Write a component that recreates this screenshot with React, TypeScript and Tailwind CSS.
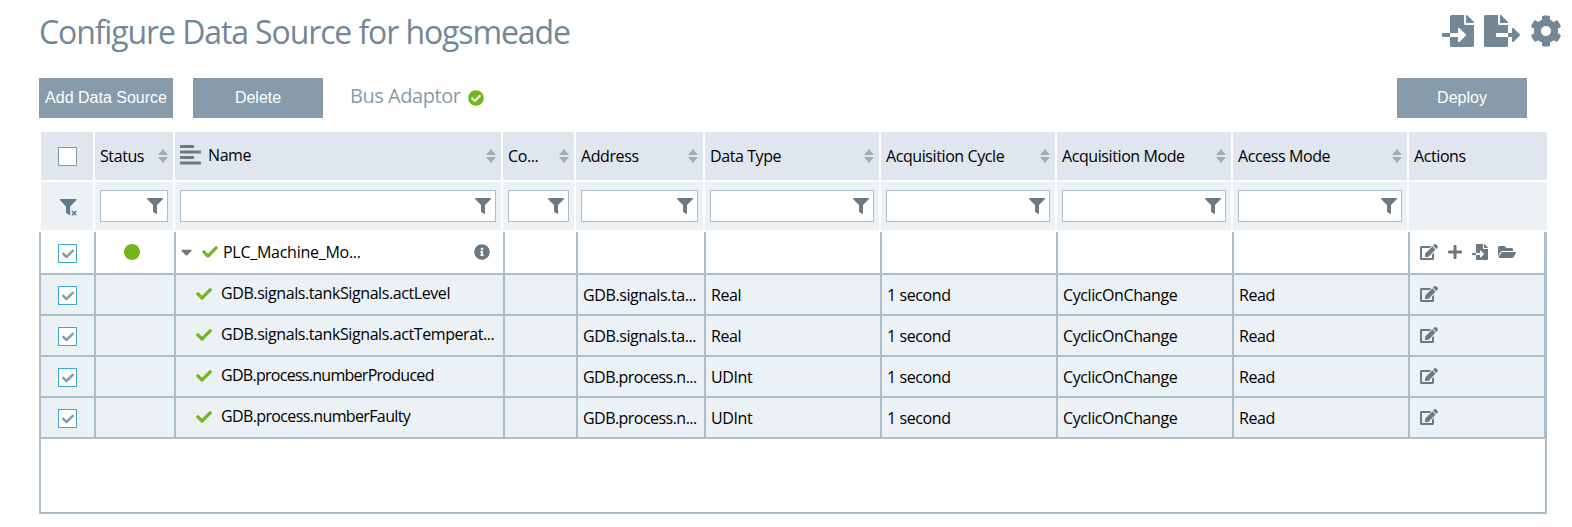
import React from "react";
import {
  FaCaretDown,
  FaCheck,
  FaCheckCircle,
  FaCog,
  FaEdit,
  FaFileExport,
  FaFileImport,
  FaFilter,
  FaFolderOpen,
  FaInfoCircle,
  FaPlus,
} from "react-icons/fa";

const HEAD_GRID =
  "grid grid-cols-[52px_78px_326px_71px_127px_174px_174px_174px_174px_138px] gap-x-0.5 pl-0.5";
const BODY_GRID =
  "grid grid-cols-[55px_80px_329px_73px_128px_176px_176px_176px_176px_136px]";

const columns = [
  "Status",
  "Name",
  "Co...",
  "Address",
  "Data Type",
  "Acquisition Cycle",
  "Acquisition Mode",
  "Access Mode",
];

const signals = [
  {
    name: "GDB.signals.tankSignals.actLevel",
    address: "GDB.signals.ta...",
    type: "Real",
    nameTracking: "tracking-[-0.41px]",
    addressTracking: "tracking-[-0.4px]",
  },
  {
    name: "GDB.signals.tankSignals.actTemperat...",
    address: "GDB.signals.ta...",
    type: "Real",
    nameTracking: "tracking-[-0.41px]",
    addressTracking: "tracking-[-0.4px]",
  },
  {
    name: "GDB.process.numberProduced",
    address: "GDB.process.n...",
    type: "UDInt",
    nameTracking: "tracking-[-0.72px]",
    addressTracking: "tracking-[-0.54px]",
  },
  {
    name: "GDB.process.numberFaulty",
    address: "GDB.process.n...",
    type: "UDInt",
    nameTracking: "tracking-[-0.63px]",
    addressTracking: "tracking-[-0.54px]",
  },
];

function SortIcon() {
  return (
    <svg width="10" height="14" viewBox="0 0 10 14" className="shrink-0 fill-[#a3adb4]">
      <path d="M5 0 10 6H0zM0 8h10l-5 6z" />
    </svg>
  );
}

function AlignIcon() {
  return (
    <svg width="21" height="20" viewBox="0 0 21 20" className="shrink-0 fill-[#6b7984]">
      <rect y="0" width="14" height="3" rx="0.6" />
      <rect y="5.5" width="21" height="3" rx="0.6" />
      <rect y="11" width="14" height="3" rx="0.6" />
      <rect y="16.5" width="21" height="3" rx="0.6" />
    </svg>
  );
}

function ClearFilterIcon() {
  return (
    <svg width="17" height="17" viewBox="0 0 17 17" className="fill-[#5f7a8a]">
      <path d="M0 0h16.4v1L10.2 7.4V16.6L6 13.8V7.4L0 1z" />
      <path
        d="M12 12l4.2 4.2M16.2 12l-4.2 4.2"
        className="stroke-[#5f7a8a]"
        strokeWidth="1.6"
      />
    </svg>
  );
}

function Checkbox({ checked }: { checked?: boolean }) {
  return (
    <span
      className={`flex size-[19px] items-center justify-center border bg-white ${
        checked ? "border-[#3fa9c9]" : "border-[#8099ab]"
      }`}
    >
      {checked && <FaCheck className="size-3 text-[#8799a9]" />}
    </span>
  );
}

function Cell({ children, className = "" }: { children?: React.ReactNode; className?: string }) {
  return (
    <div
      className={`flex items-center overflow-hidden border-r-2 border-b-2 border-[#aabecb] whitespace-nowrap ${className}`}
    >
      {children}
    </div>
  );
}

function Button({ children, className }: { children: React.ReactNode; className: string }) {
  return (
    <button
      className={`h-10 shrink-0 bg-[#879baa] pb-px font-['Liberation_Sans',sans-serif] text-base tracking-normal whitespace-nowrap text-white ${className}`}
    >
      {children}
    </button>
  );
}

export default function App() {
  return (
    <div className="h-[527px] w-[1572px] overflow-hidden bg-white font-['Open_Sans',sans-serif] text-base tracking-[-0.41px] text-black">
      <header className="flex h-[78px] justify-between pr-[10px] pl-[39px]">
        <h1 className="pt-[8px] text-[32px] leading-[48px] tracking-[-1.11px] whitespace-nowrap text-[#738797]">
          Configure Data Source for hogsmeade
        </h1>
        <div className="flex gap-[10px] pt-[15px] text-[#738797]">
          <FaFileImport className="h-8 w-8" />
          <FaFileExport className="h-8 w-9" />
          <FaCog className="h-8 w-8" />
        </div>
      </header>

      <div className="flex h-[54px] pr-[45px] pl-[39px]">
        <Button className="w-[134px]">Add Data Source</Button>
        <Button className="ml-5 w-[130px]">Delete</Button>
        <div className="ml-[27px] flex h-10 items-center gap-[7px] pb-[4px] text-xl tracking-[-0.45px] text-[#879baa]">
          Bus Adaptor
          <FaCheckCircle className="mt-[4px] size-4 text-[#74b61b]" />
        </div>
        <Button className="ml-auto w-[130px]">Deploy</Button>
      </div>

      <main className="ml-[39px] w-[1508px]">
        <div className={`${HEAD_GRID} h-12`}>
          <div className="flex items-center justify-center bg-[#dfe6ed] pt-px">
            <Checkbox />
          </div>
          {columns.map((c) => (
            <div
              key={c}
              className="flex items-center justify-between bg-[#dfe6ed] pr-[5px] pl-[5px] whitespace-nowrap"
            >
              {c === "Name" ? (
                <span className="flex items-center gap-[7px] pb-0.5">
                  <AlignIcon />
                  {c}
                </span>
              ) : (
                <span>{c}</span>
              )}
              <SortIcon />
            </div>
          ))}
          <div className="flex items-center bg-[#dfe6ed] pl-[5px]">Actions</div>
        </div>

        <div className={`${HEAD_GRID} mt-0.5 h-12`}>
          <div className="flex items-center justify-center bg-[#ebf1f5] pt-[3px] pl-0.5">
            <ClearFilterIcon />
          </div>
          {columns.map((c) => (
            <div key={c} className="bg-[#ebf1f5] px-[5px] py-2">
              <div className="flex h-8 items-center justify-end border border-[#aabecb] bg-white pr-1">
                <FaFilter className="size-4 text-[#6b7984]" />
              </div>
            </div>
          ))}
          <div className="bg-[#ebf1f5]" />
        </div>

        <div className="mt-0.5 h-[282px] border-2 border-t-0 border-[#aabecb]">
          <div className={`${BODY_GRID} h-[43px]`}>
            <Cell className="justify-center pt-0.5">
              <Checkbox checked />
            </Cell>
            <Cell className="justify-center pr-[6px] pb-px">
              <span className="size-4 rounded-full bg-[#74b61b]" />
            </Cell>
            <Cell className="pr-[13px] pb-px pl-[5px]">
              <FaCaretDown className="h-[18px] w-[11px] text-[#6b7984]" />
              <FaCheck className="ml-[10px] size-4 text-[#74b61b]" />
              <span className="ml-[5px] pb-px tracking-[-0.27px]">PLC_Machine_Mo...</span>
              <FaInfoCircle className="ml-auto size-4 text-[#6b7984]" />
            </Cell>
            <Cell />
            <Cell />
            <Cell />
            <Cell />
            <Cell />
            <Cell />
            <Cell className="pb-px pl-[10px] text-[#6b7984]">
              <FaEdit className="h-4 w-[18px]" />
              <FaPlus className="ml-[10px] h-4 w-[14px]" />
              <FaFileImport className="ml-[10px] size-4" />
              <FaFolderOpen className="ml-[10px] h-4 w-[18px]" />
            </Cell>
          </div>
          {signals.map((s) => (
            <div key={s.name} className={`${BODY_GRID} h-[41px] bg-[#ebf1f5]`}>
              <Cell className="justify-center pt-0.5">
                <Checkbox checked />
              </Cell>
              <Cell />
              <Cell className="pb-px pl-5">
                <FaCheck className="size-4 shrink-0 text-[#74b61b]" />
                <span className={`ml-[9px] pb-0.5 ${s.nameTracking}`}>{s.name}</span>
              </Cell>
              <Cell />
              <Cell className={`pl-[5px] ${s.addressTracking}`}>{s.address}</Cell>
              <Cell className="pl-[5px]">{s.type}</Cell>
              <Cell className="pl-[5px]">1 second</Cell>
              <Cell className="pl-[5px]">CyclicOnChange</Cell>
              <Cell className="pl-[5px]">Read</Cell>
              <Cell className="pb-px pl-[10px]">
                <FaEdit className="h-4 w-[18px] text-[#6b7984]" />
              </Cell>
            </div>
          ))}
        </div>
      </main>
    </div>
  );
}
